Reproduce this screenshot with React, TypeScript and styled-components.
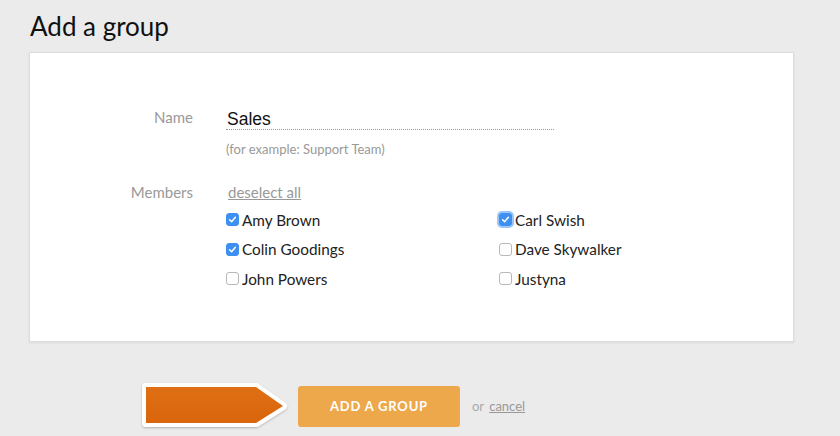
import React, { useState } from 'react';
import styled, { createGlobalStyle } from 'styled-components';

const GlobalStyle = createGlobalStyle`
  html, body {
    margin: 0;
    padding: 0;
    background: #ebebeb;
    font-family: Lato, 'Open Sans', sans-serif;
  }
`;

type Member = { name: string; checked: boolean; focused?: boolean };

const initialMembers: Member[] = [
  { name: 'Amy Brown', checked: true },
  { name: 'Carl Swish', checked: true, focused: true },
  { name: 'Colin Goodings', checked: true },
  { name: 'Dave Skywalker', checked: false },
  { name: 'John Powers', checked: false },
  { name: 'Justyna', checked: false },
];

const App: React.FC = () => {
  const [members, setMembers] = useState<Member[]>(initialMembers);
  const [groupName, setGroupName] = useState('Sales');

  const toggle = (index: number) => {
    setMembers(prev => prev.map((m, i) => (i === index ? { ...m, checked: !m.checked } : m)));
  };

  return (
    <Page>
      <GlobalStyle />
      <Title>Add a group</Title>
      <Card>
        <FormRow>
          <Label $pad={5}>Name</Label>
          <Field>
            <NameInput value={groupName} onChange={e => setGroupName(e.target.value)} />
            <Hint>(for example: Support Team)</Hint>
          </Field>
        </FormRow>
        <FormRow $top={25}>
          <Label>Members</Label>
          <Field>
            <TextLink>deselect all</TextLink>
            <MemberGrid>
              {members.map((m, i) => (
                <MemberItem key={m.name} onClick={() => toggle(i)}>
                  <Check $checked={m.checked} $focused={m.focused}>
                    {m.checked && (
                      <svg width="9" height="9" viewBox="0 0 9 9">
                        <path
                          d="M1.6 4.7 L3.6 6.7 L7.4 2.2"
                          fill="none"
                          stroke="#fff"
                          strokeWidth="1.5"
                          strokeLinecap="round"
                          strokeLinejoin="round"
                        />
                      </svg>
                    )}
                  </Check>
                  <MemberName>{m.name}</MemberName>
                </MemberItem>
              ))}
            </MemberGrid>
          </Field>
        </FormRow>
      </Card>
      <Footer>
        <Pointer width="148" height="48" viewBox="0 0 148 48">
          <defs>
            <filter id="pshadow" x="-10%" y="-20%" width="120%" height="150%">
              <feDropShadow dx="0" dy="1" stdDeviation="1.2" floodColor="#000" floodOpacity="0.25" />
            </filter>
            <linearGradient id="porange" x1="0" y1="0" x2="0" y2="1">
              <stop offset="0" stopColor="#df6f14" />
              <stop offset="1" stopColor="#d9650c" />
            </linearGradient>
          </defs>
          <polygon
            points="5,5 115,5 142,24 115,41 5,41"
            fill="#fff"
            stroke="#fff"
            strokeWidth="8"
            strokeLinejoin="round"
            filter="url(#pshadow)"
          />
          <polygon points="5,5 115,5 142,24 115,41 5,41" fill="url(#porange)" />
        </Pointer>
        <SubmitButton>ADD A GROUP</SubmitButton>
        <OrText>
          or <TextLink $size={13}>cancel</TextLink>
        </OrText>
      </Footer>
    </Page>
  );
};

const Page = styled.div`
  width: 840px;
  height: 436px;
  overflow: hidden;
  padding: 10px 0 0 29px;
  box-sizing: border-box;
`;

const Title = styled.h1`
  margin: 0 0 10px 1px;
  font-size: 26px;
  font-weight: 400;
  line-height: 32px;
  color: #111;
`;

const Card = styled.div`
  width: 765px;
  height: 290px;
  box-sizing: border-box;
  background: #fff;
  border: 1px solid #dcdcdc;
  box-shadow: 0 1px 2px rgba(0, 0, 0, 0.08);
  padding-top: 49px;
`;

const FormRow = styled.div<{ $top?: number }>`
  display: grid;
  grid-template-columns: 163px 1fr;
  column-gap: 33px;
  margin-top: ${p => p.$top ?? 0}px;
`;

const Label = styled.div<{ $pad?: number }>`
  text-align: right;
  font-size: 15px;
  line-height: 20px;
  padding-top: ${p => p.$pad ?? 0}px;
  color: #999;
`;

const Field = styled.div`
  display: flex;
  flex-direction: column;
  align-items: flex-start;
`;

const NameInput = styled.input`
  width: 328px;
  height: 28px;
  box-sizing: border-box;
  border: none;
  border-bottom: 1px dotted #999;
  outline: none;
  padding: 8px 0 0 1px;
  font-family: 'Liberation Sans', Arial, sans-serif;
  font-size: 17.5px;
  color: #111;
  background: transparent;
`;

const Hint = styled.div`
  margin-top: 11px;
  font-size: 13px;
  line-height: 16px;
  color: #999;
`;

const TextLink = styled.a<{ $size?: number }>`
  font-size: ${p => p.$size ?? 15}px;
  line-height: 20px;
  color: #999;
  text-decoration: underline;
  cursor: pointer;
  margin-left: 2px;
`;

const MemberGrid = styled.div`
  margin-top: 3px;
  display: grid;
  grid-template-columns: 273px 273px;
  grid-auto-rows: 29.5px;
`;

const MemberItem = styled.label`
  display: flex;
  align-items: center;
  gap: 3px;
  cursor: pointer;
`;

const Check = styled.span<{ $checked: boolean; $focused?: boolean }>`
  width: 13px;
  height: 13px;
  box-sizing: border-box;
  border-radius: 3px;
  display: flex;
  align-items: center;
  justify-content: center;
  background: ${p => (p.$checked ? '#3d8ff0' : '#fff')};
  border: 1px solid ${p => (p.$checked ? '#3d8ff0' : '#b8b8b8')};
  box-shadow: ${p => (p.$focused ? '0 0 0 2px rgba(72, 150, 240, 0.55)' : 'none')};
`;

const MemberName = styled.span`
  font-size: 15.3px;
  line-height: 20px;
  color: #222;
`;

const Footer = styled.div`
  display: flex;
  align-items: center;
  margin: 40px 0 0 112px;
  height: 48px;
`;

const Pointer = styled.svg`
  display: block;
  flex: none;
`;

const SubmitButton = styled.button`
  margin-left: 9px;
  width: 162px;
  height: 41px;
  border: none;
  border-radius: 3px;
  background: #eea84c;
  color: #fff;
  font-family: Lato, sans-serif;
  font-weight: 700;
  font-size: 13px;
  letter-spacing: 0.8px;
  cursor: pointer;
`;

const OrText = styled.span`
  margin-left: 12px;
  font-size: 13px;
  color: #aaa;
`;

export default App;
